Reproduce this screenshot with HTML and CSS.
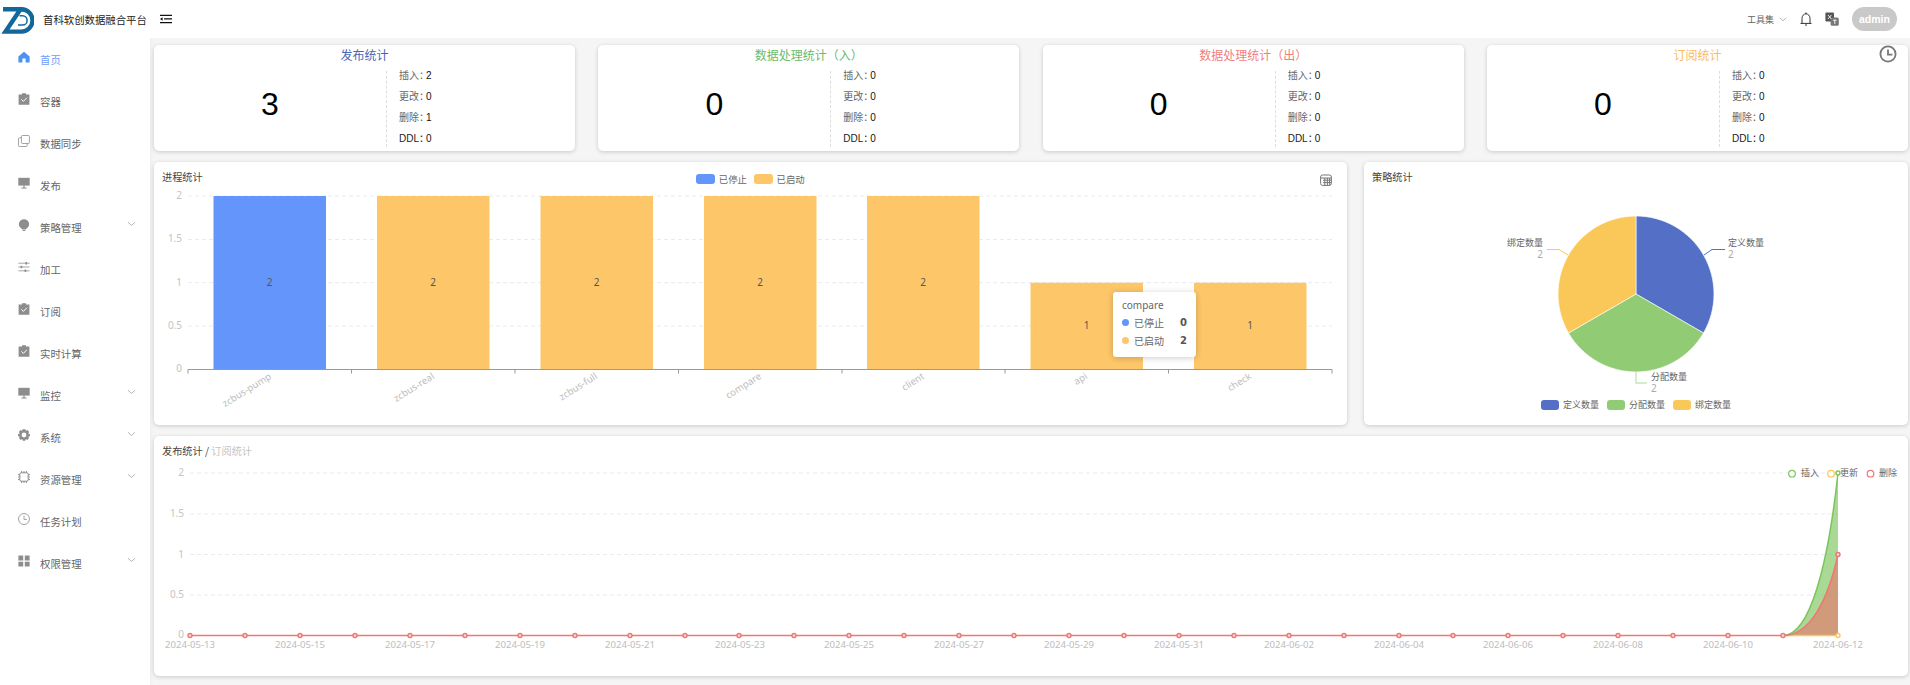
FILE: index.html
```html
<!DOCTYPE html>
<html>
<head>
    <title>首科软创数据融合平台</title>
    <link rel="stylesheet" href="styles.css">
</head>
<body>

<svg class="icon-defs" width="0" height="0">
    <symbol id="i-home" viewBox="0 0 12 12"><path d="M6 .8 11.6 5.6V11.4H7.6V7.6H4.4V11.4H.4V5.6Z"/></symbol>
    <symbol id="i-task" viewBox="0 0 12 12"><path d="M4 .2H8V1.4H11.4V11.8H.6V1.4H4Z"/><path d="M3.4 6.4 5.4 8.4 8.8 4.8" fill="none" stroke="#fff" stroke-width="1"/></symbol>
    <symbol id="i-copy" viewBox="0 0 12 12"><g fill="none" stroke="currentColor" stroke-width=".8"><rect x="3.4" y=".5" width="8" height="8" rx="1"/><path d="M3.4 2.8H1.4Q.5 2.8.5 3.7V10.5Q.5 11.5 1.5 11.5H8.2Q9.1 11.5 9.1 10.5V8.5"/></g></symbol>
    <symbol id="i-screen" viewBox="0 0 12 12"><path d="M.3 .8H11.7V8.6H.3Z"/><path d="M3.4 10.6H8.6V11.4H3.4ZM5.4 8.6H6.6V10.6H5.4Z"/></symbol>
    <symbol id="i-bulb" viewBox="0 0 12 12"><path d="M6 .2A5 5 0 0 1 8.6 9.5L7.8 10.4H4.2L3.4 9.5A5 5 0 0 1 6 .2Z"/><path d="M4.6 11H7.4V11.9H4.6Z"/></symbol>
    <symbol id="i-sliders" viewBox="0 0 12 12"><g fill="none" stroke="currentColor" stroke-width=".8"><path d="M.4 2.2H11.6M.4 6H11.6M.4 9.8H11.6"/></g><path d="M7.4 .9H9V3.5H7.4ZM2.6 4.7H4.2V7.3H2.6ZM6.6 8.5H8.2V11.1H6.6Z"/></symbol>
    <symbol id="i-gear" viewBox="0 0 12 12"><path fill-rule="evenodd" d="M4.6.2H7.4L7.9 1.8 9.5 1.1 11.1 3 10.1 4.4 11.9 5V7.2L10.2 7.7 11 9.3 9.2 11 7.8 10 7.2 11.8H4.8L4.2 10 2.8 11 1 9.3 1.8 7.7.1 7.2V5L1.9 4.4.9 3 2.5 1.1 4.1 1.8ZM6 3.6A2.4 2.4 0 1 0 6 8.4 2.4 2.4 0 0 0 6 3.6Z"/></symbol>
    <symbol id="i-chip" viewBox="0 0 12 12"><g fill="none" stroke="currentColor" stroke-width="1"><rect x="1.8" y="1.8" width="8.4" height="8.4" rx="1.4"/><path d="M3.6 0V1.8M6 0V1.8M8.4 0V1.8M3.6 10.2V12M6 10.2V12M8.4 10.2V12M0 3.6H1.8M0 6H1.8M0 8.4H1.8M10.2 3.6H12M10.2 6H12M10.2 8.4H12"/></g></symbol>
    <symbol id="i-clock" viewBox="0 0 12 12"><g fill="none" stroke="currentColor" stroke-width=".8"><circle cx="6" cy="6" r="5.5"/><path d="M6 2.6V6.4H9"/></g></symbol>
    <symbol id="i-grid" viewBox="0 0 12 12"><path d="M.4 .6H5.2V5.4H.4ZM6.8 .6H11.6V5.4H6.8ZM.4 6.8H5.2V11.6H.4ZM6.8 6.8H11.6V11.6H6.8Z"/></symbol>
    <symbol id="i-down" viewBox="0 0 10 6"><path d="M1 1 5 4.6 9 1" fill="none" stroke="currentColor" stroke-width=".8"/></symbol>
</svg>

<div class="app">
    <aside class="sidebar">
        <div class="brand">
            <svg class="logo" viewBox="0 0 34 34">
                <path d="M3 7.2H21.5A11 11.2 0 0 1 21.5 29.6H5.5L20 8" fill="none" stroke="#12689b" stroke-width="4.4"/>
                <path d="M19.5 13.8H22.5A4.6 4.6 0 0 1 22.5 23H18" fill="none" stroke="#12689b" stroke-width="1.5"/>
            </svg>
            <span class="brand-name">首科软创数据融合平台</span>
        </div>
        <nav class="menu">
            <a class="menu-item active"><svg class="menu-icon"><use href="#i-home"/></svg>首页</a>
            <a class="menu-item"><svg class="menu-icon"><use href="#i-task"/></svg>容器</a>
            <a class="menu-item"><svg class="menu-icon"><use href="#i-copy"/></svg>数据同步</a>
            <a class="menu-item"><svg class="menu-icon"><use href="#i-screen"/></svg>发布</a>
            <a class="menu-item"><svg class="menu-icon"><use href="#i-bulb"/></svg>策略管理<svg class="menu-arrow"><use href="#i-down"/></svg></a>
            <a class="menu-item"><svg class="menu-icon"><use href="#i-sliders"/></svg>加工</a>
            <a class="menu-item"><svg class="menu-icon"><use href="#i-task"/></svg>订阅</a>
            <a class="menu-item"><svg class="menu-icon"><use href="#i-task"/></svg>实时计算</a>
            <a class="menu-item"><svg class="menu-icon"><use href="#i-screen"/></svg>监控<svg class="menu-arrow"><use href="#i-down"/></svg></a>
            <a class="menu-item"><svg class="menu-icon"><use href="#i-gear"/></svg>系统<svg class="menu-arrow"><use href="#i-down"/></svg></a>
            <a class="menu-item"><svg class="menu-icon"><use href="#i-chip"/></svg>资源管理<svg class="menu-arrow"><use href="#i-down"/></svg></a>
            <a class="menu-item"><svg class="menu-icon"><use href="#i-clock"/></svg>任务计划</a>
            <a class="menu-item"><svg class="menu-icon"><use href="#i-grid"/></svg>权限管理<svg class="menu-arrow"><use href="#i-down"/></svg></a>
        </nav>
    </aside>

    <div class="main">
        <header class="topbar">
            <svg class="collapse-btn" viewBox="0 0 12 10"><path d="M0 .7H12V2H0ZM4 4.3H12V5.6H4ZM0 8H12V9.3H0ZM0 5 2.6 3.2V6.8Z"/></svg>
            <div class="topbar-right">
                <span class="tools">工具集<svg class="tools-arrow"><use href="#i-down"/></svg></span>
                <svg class="top-icon" viewBox="0 0 14 14"><path d="M1.5 11.4H12.5M3 11.4V6.4A4 4.6 0 0 1 11 6.4V11.4M6.2 1.2H7.8M6 13H8" fill="none" stroke="#333" stroke-width="1"/></svg>
                <svg class="top-icon" viewBox="0 0 14 14"><rect x=".4" y=".6" width="8.6" height="9" rx="1" fill="#555"/><rect x="5.6" y="5.6" width="8.2" height="8.2" rx="1.6" fill="#777"/><path d="M3 3 6.4 7M6.4 3 3 7M8 8.2H11.6M9.8 8V12" stroke="#fff" stroke-width=".9"/></svg>
                <span class="user-pill">admin</span>
            </div>
        </header>

        <div class="content">
            <section class="stat-row">
                <div class="stat-card">
                    <h3 class="stat-title title-blue">发布统计</h3>
                    <div class="stat-body">
                        <div class="stat-total">3</div>
                        <ul class="stat-list">
                            <li><span>插入：</span><b>2</b></li>
                            <li><span>更改：</span><b>0</b></li>
                            <li><span>删除：</span><b>1</b></li>
                            <li><span class="ddl">DDL：</span><b>0</b></li>
                        </ul>
                    </div>
                </div>
                <div class="stat-card">
                    <h3 class="stat-title title-green">数据处理统计（入）</h3>
                    <div class="stat-body">
                        <div class="stat-total">0</div>
                        <ul class="stat-list">
                            <li><span>插入：</span><b>0</b></li>
                            <li><span>更改：</span><b>0</b></li>
                            <li><span>删除：</span><b>0</b></li>
                            <li><span class="ddl">DDL：</span><b>0</b></li>
                        </ul>
                    </div>
                </div>
                <div class="stat-card">
                    <h3 class="stat-title title-red">数据处理统计（出）</h3>
                    <div class="stat-body">
                        <div class="stat-total">0</div>
                        <ul class="stat-list">
                            <li><span>插入：</span><b>0</b></li>
                            <li><span>更改：</span><b>0</b></li>
                            <li><span>删除：</span><b>0</b></li>
                            <li><span class="ddl">DDL：</span><b>0</b></li>
                        </ul>
                    </div>
                </div>
                <div class="stat-card">
                    <h3 class="stat-title title-orange">订阅统计</h3>
                    <svg class="stat-clock" viewBox="0 0 18 18"><circle cx="9" cy="9" r="7.6"/><path d="M9 4.4V9.6H13.4"/></svg>
                    <div class="stat-body">
                        <div class="stat-total">0</div>
                        <ul class="stat-list">
                            <li><span>插入：</span><b>0</b></li>
                            <li><span>更改：</span><b>0</b></li>
                            <li><span>删除：</span><b>0</b></li>
                            <li><span class="ddl">DDL：</span><b>0</b></li>
                        </ul>
                    </div>
                </div>
            </section>

            <section class="chart-row">
                <div class="panel">
                    <div class="panel-head">
                        <span class="panel-title">进程统计</span>
                        <div class="bar-legend">
                            <span class="legend-key key-blue"></span><span>已停止</span>
                            <span class="legend-key key-orange"></span><span>已启动</span>
                        </div>
                        <svg class="toolbox" viewBox="0 0 12 12"><rect x=".6" y="1" width="10.8" height="10.4" rx="2"/><path d="M.6 4H11.4M3 6.2H11.4M3 8.6H11.4M4.8 4V11.4M7.4 4V11.4M9.6 4V11.4"/></svg>
                    </div>
                    <svg class="chart" viewBox="154 188 1193 237" width="1193" height="237">
                        <g class="grid">
                            <path d="M188 196H1332M188 239.5H1332M188 282.7H1332M188 326H1332"/>
                        </g>
                        <g class="axis-y" text-anchor="end">
                            <text x="182" y="199">2</text>
                            <text x="182" y="242">1.5</text>
                            <text x="182" y="286">1</text>
                            <text x="182" y="329">0.5</text>
                            <text x="182" y="372">0</text>
                        </g>
                        <rect class="bar-blue" x="213.5" y="196" width="112.5" height="173.5"/>
                        <rect class="bar-orange" x="377" y="196" width="112.5" height="173.5"/>
                        <rect class="bar-orange" x="540.5" y="196" width="112.5" height="173.5"/>
                        <rect class="bar-orange" x="704" y="196" width="112.5" height="173.5"/>
                        <rect class="bar-orange" x="867" y="196" width="112.5" height="173.5"/>
                        <rect class="bar-orange" x="1030.5" y="282.7" width="112.5" height="86.8"/>
                        <rect class="bar-orange" x="1194" y="282.7" width="112.5" height="86.8"/>
                        <path class="axis-line" d="M188 373.5V369.5H1332V373.5M351.5 369.5V373.5M515 369.5V373.5M678.5 369.5V373.5M842 369.5V373.5M1005 369.5V373.5M1168.5 369.5V373.5"/>
                        <g class="bar-value" text-anchor="middle">
                            <text x="269.7" y="286">2</text>
                            <text x="433" y="286">2</text>
                            <text x="596.7" y="286">2</text>
                            <text x="760" y="286">2</text>
                            <text x="923" y="286">2</text>
                            <text x="1086.7" y="329">1</text>
                            <text x="1250" y="329">1</text>
                        </g>
                        <g class="axis-x" text-anchor="end">
                            <text transform="translate(272 378) rotate(-32)">zcbus-pump</text>
                            <text transform="translate(435 378) rotate(-32)">zcbus-real</text>
                            <text transform="translate(598 378) rotate(-32)">zcbus-full</text>
                            <text transform="translate(762 378) rotate(-32)">compare</text>
                            <text transform="translate(925 378) rotate(-32)">client</text>
                            <text transform="translate(1088 378) rotate(-32)">api</text>
                            <text transform="translate(1252 378) rotate(-32)">check</text>
                        </g>
                    </svg>
                    <div class="tooltip">
                        <div class="tooltip-name">compare</div>
                        <div class="tooltip-row"><i class="dot key-blue"></i><span>已停止</span><b>0</b></div>
                        <div class="tooltip-row"><i class="dot key-orange"></i><span>已启动</span><b>2</b></div>
                    </div>
                </div>

                <div class="panel">
                    <div class="panel-head">
                        <span class="panel-title">策略统计</span>
                    </div>
                    <svg class="chart" viewBox="1364 188 544 237" width="544" height="237">
                        <path class="slice" fill="#5470c6" d="M1636 294V216A78 78 0 0 1 1703.5 333Z"/>
                        <path class="slice" fill="#91cc75" d="M1636 294 1703.5 333A78 78 0 0 1 1568.5 333Z"/>
                        <path class="slice" fill="#fac858" d="M1636 294 1568.5 333A78 78 0 0 1 1636 216Z"/>
                        <path class="guide" stroke="#5470c6" d="M1704 255 1712 249.5H1725"/>
                        <path class="guide" stroke="#c8e6b8" stroke-width="1.4" d="M1636 372V383H1647"/>
                        <path class="guide" stroke="#fac858" d="M1568 255 1559 249.5H1547"/>
                        <g class="pie-label">
                            <text x="1728" y="246">定义数量</text>
                            <text class="pie-count" x="1728" y="258">2</text>
                            <text x="1651" y="380">分配数量</text>
                            <text class="pie-count" x="1651" y="392">2</text>
                            <g text-anchor="end">
                                <text x="1543" y="246">绑定数量</text>
                                <text class="pie-count" x="1543" y="258">2</text>
                            </g>
                        </g>
                        <rect x="1541" y="400" width="18" height="10" rx="3" fill="#5470c6"/>
                        <rect x="1607" y="400" width="18" height="10" rx="3" fill="#91cc75"/>
                        <rect x="1673" y="400" width="18" height="10" rx="3" fill="#fac858"/>
                        <g class="pie-label">
                            <text x="1563" y="408">定义数量</text>
                            <text x="1629" y="408">分配数量</text>
                            <text x="1695" y="408">绑定数量</text>
                        </g>
                    </svg>
                </div>
            </section>

            <section class="panel trend-panel">
                <div class="panel-head">
                    <span class="panel-title">发布统计 / <span class="title-off">订阅统计</span></span>
                </div>
                <svg class="chart" viewBox="154 462 1754 214" width="1754" height="214">
                    <g class="grid"><path d="M190 473H1838M190 514H1838M190 554.5H1838M190 595H1838"/></g>
                    <g class="axis-y" text-anchor="end">
                        <text x="184" y="476">2</text>
                        <text x="184" y="517">1.5</text>
                        <text x="184" y="557.5">1</text>
                        <text x="184" y="598">0.5</text>
                        <text x="184" y="638">0</text>
                    </g>
                    <g class="axis-x" text-anchor="middle">
                        <text x="190" y="648">2024-05-13</text>
                        <text x="300" y="648">2024-05-15</text>
                        <text x="410" y="648">2024-05-17</text>
                        <text x="520" y="648">2024-05-19</text>
                        <text x="630" y="648">2024-05-21</text>
                        <text x="740" y="648">2024-05-23</text>
                        <text x="849" y="648">2024-05-25</text>
                        <text x="959" y="648">2024-05-27</text>
                        <text x="1069" y="648">2024-05-29</text>
                        <text x="1179" y="648">2024-05-31</text>
                        <text x="1289" y="648">2024-06-02</text>
                        <text x="1399" y="648">2024-06-04</text>
                        <text x="1508" y="648">2024-06-06</text>
                        <text x="1618" y="648">2024-06-08</text>
                        <text x="1728" y="648">2024-06-10</text>
                        <text x="1838" y="648">2024-06-12</text>
                    </g>
                    <path class="area-green" d="M1783 635.5C1810 635.5 1828 565 1838 473V635.5Z"/>
                    <path class="area-red" d="M1783 635.5C1810 635.5 1828 600 1838 554.5V635.5Z"/>
                    <path class="line-yellow" d="M1783 635.5H1838"/>
                    <path class="line-green" d="M1783 635.5C1810 635.5 1828 565 1838 473"/>
                    <path class="line-red" d="M190 635.5H1783C1810 635.5 1828 600 1838 554.5"/>
                    <circle class="mark-green" cx="1838" cy="473" r="2"/>
                    <circle class="mark-yellow" cx="1838" cy="635.5" r="2"/>
                    <g class="mark-red">
                        <circle cx="190" cy="635.5" r="2"/><circle cx="245" cy="635.5" r="2"/><circle cx="300" cy="635.5" r="2"/>
                        <circle cx="355" cy="635.5" r="2"/><circle cx="410" cy="635.5" r="2"/><circle cx="465" cy="635.5" r="2"/>
                        <circle cx="520" cy="635.5" r="2"/><circle cx="575" cy="635.5" r="2"/><circle cx="630" cy="635.5" r="2"/>
                        <circle cx="685" cy="635.5" r="2"/><circle cx="739" cy="635.5" r="2"/><circle cx="794" cy="635.5" r="2"/>
                        <circle cx="849" cy="635.5" r="2"/><circle cx="904" cy="635.5" r="2"/><circle cx="959" cy="635.5" r="2"/>
                        <circle cx="1014" cy="635.5" r="2"/><circle cx="1069" cy="635.5" r="2"/><circle cx="1124" cy="635.5" r="2"/>
                        <circle cx="1179" cy="635.5" r="2"/><circle cx="1234" cy="635.5" r="2"/><circle cx="1289" cy="635.5" r="2"/>
                        <circle cx="1344" cy="635.5" r="2"/><circle cx="1399" cy="635.5" r="2"/><circle cx="1453" cy="635.5" r="2"/>
                        <circle cx="1508" cy="635.5" r="2"/><circle cx="1563" cy="635.5" r="2"/><circle cx="1618" cy="635.5" r="2"/>
                        <circle cx="1673" cy="635.5" r="2"/><circle cx="1728" cy="635.5" r="2"/><circle cx="1783" cy="635.5" r="2"/>
                        <circle cx="1838" cy="554.5" r="2"/>
                    </g>
                    <circle class="legend-ring" stroke="#7cc45c" cx="1792" cy="473.7" r="3.3"/>
                    <circle class="legend-ring" stroke="#fac858" cx="1831" cy="473.7" r="3.3"/>
                    <circle class="legend-ring" stroke="#ee7777" cx="1870.5" cy="473.7" r="3.3"/>
                    <g class="pie-label">
                        <text x="1801" y="476">插入</text>
                        <text x="1840" y="476">更新</text>
                        <text x="1879" y="476">删除</text>
                    </g>
                </svg>
            </section>
        </div>
    </div>
</div>

</body>
</html>
```

FILE: styles.css
```css
* {
    box-sizing: border-box;
}

body {
    margin: 0;
    width: 1910px;
    height: 685px;
    overflow: hidden;
    background-color: #f5f5f5;
    color: #333;
    font-family: "Liberation Sans", "Noto Sans CJK SC", sans-serif;
    font-size: 10px;
}

.icon-defs {
    position: absolute;
}

.app {
    display: flex;
    height: 100%;
}

/* sidebar */
.sidebar {
    width: 150px;
    flex-shrink: 0;
    background-color: #fff;
    box-shadow: 1px 0 4px rgba(0, 0, 0, 0.04);
}

.brand {
    display: flex;
    align-items: center;
    height: 38px;
}

.logo {
    width: 34px;
    height: 34px;
    flex-shrink: 0;
}

.brand-name {
    margin-left: 9px;
    font-size: 10.4px;
    color: #222;
    white-space: nowrap;
}

.menu-item {
    display: flex;
    align-items: center;
    height: 42px;
    padding: 0 14px 0 18px;
    color: #666;
    fill: #8d8d8d;
    font-size: 10.4px;
}

.menu-item.active {
    color: #6f9dff;
    fill: #4c93f5;
}

.menu-icon {
    width: 12px;
    height: 12px;
    margin-right: 10px;
    margin-top: -4px;
    color: #8d8d8d;
}

.menu-arrow {
    width: 9px;
    height: 6px;
    margin-left: auto;
    margin-top: -7px;
    color: #999;
}

/* top bar */
.main {
    flex: 1;
    min-width: 0;
}

.topbar {
    display: flex;
    align-items: center;
    justify-content: space-between;
    height: 38px;
    padding: 0 13px 0 10px;
    background-color: #fff;
}

.collapse-btn {
    width: 12px;
    height: 10px;
    fill: #111;
}

.topbar-right {
    display: flex;
    align-items: center;
}

.tools {
    display: flex;
    align-items: center;
    font-size: 9px;
    color: #666;
}

.tools-arrow {
    width: 8px;
    height: 5px;
    margin-left: 5px;
    color: #888;
}

.top-icon {
    width: 14px;
    height: 14px;
    margin-left: 12px;
}

.user-pill {
    width: 45px;
    height: 24px;
    margin-left: 13px;
    border-radius: 12px;
    background-color: #c9c9c9;
    color: #fff;
    font-size: 10.5px;
    font-weight: bold;
    line-height: 24px;
    text-align: center;
}

/* page content */
.content {
    display: flex;
    flex-direction: column;
    gap: 11px;
    padding: 7px 2px 0 4px;
}

.stat-row {
    display: grid;
    grid-template-columns: repeat(4, 421px);
    gap: 23.33px;
}

.stat-card {
    position: relative;
    height: 106px;
    padding-top: 4px;
    background-color: #fff;
    border-radius: 5px;
    box-shadow: 0 1px 4px rgba(0, 0, 0, 0.18);
}

.stat-title {
    margin: 0;
    height: 22px;
    font-size: 12px;
    font-weight: normal;
    line-height: 14px;
    text-align: center;
}

.title-blue {
    color: #4a66b8;
}

.title-green {
    color: #6cba6c;
}

.title-red {
    color: #ef7f7f;
}

.title-orange {
    color: #f7bd5f;
}

.stat-clock {
    position: absolute;
    top: 0;
    right: 11px;
    width: 18px;
    height: 18px;
    fill: none;
    stroke: #777;
    stroke-width: 1.8;
}

.stat-body {
    display: flex;
    height: 76px;
}

.stat-total {
    width: 233px;
    padding-bottom: 2px;
    border-right: 1px dashed #ddd;
    color: #000;
    font-size: 32px;
    line-height: 66px;
    text-align: center;
}

.stat-list {
    margin: 0;
    padding: 0 0 0 12px;
    list-style: none;
}

.stat-list li {
    display: flex;
    height: 10px;
    margin-bottom: 11px;
    line-height: 10px;
}

.stat-list span {
    width: 27px;
    color: #666;
    white-space: nowrap;
}

.stat-list .ddl {
    color: #222;
}

.stat-list b {
    color: #111;
    font-weight: normal;
}

.chart-row {
    display: grid;
    grid-template-columns: 1193px 544px;
    gap: 17px;
}

.panel {
    position: relative;
    height: 263px;
    background-color: #fff;
    border-radius: 5px;
    box-shadow: 0 1px 4px rgba(0, 0, 0, 0.18);
}

.trend-panel {
    height: 240px;
}

.panel-head {
    display: grid;
    grid-template-columns: 1fr auto 1fr;
    align-items: center;
    height: 26px;
    padding: 2px 15px 0 8px;
}

.panel-title {
    font-family: "Noto Sans CJK SC", sans-serif;
    font-size: 10.2px;
    color: #444;
    white-space: nowrap;
}

.title-off {
    color: #c4c4c4;
}

.bar-legend {
    display: flex;
    align-items: center;
    margin: 6px 0 0 7px;
    font-family: "Noto Sans CJK SC", sans-serif;
    font-size: 9.4px;
    color: #666;
}

.legend-key {
    width: 18.5px;
    height: 10px;
    margin-right: 4px;
    border-radius: 3px;
}

.legend-key + span + .legend-key {
    margin-left: 7px;
}

.key-blue {
    background-color: #6395fa;
}

.key-orange {
    background-color: #fcc669;
}

.toolbox {
    justify-self: end;
    width: 12px;
    height: 12px;
    margin-top: 8px;
    fill: none;
    stroke: #777;
    stroke-width: 1;
}

/* charts */
.chart {
    display: block;
    font-family: "Noto Sans", "Noto Sans CJK SC", sans-serif;
}

.grid path {
    fill: none;
    stroke: #e6ebf4;
    stroke-dasharray: 4 3;
}

.axis-y text {
    fill: #c4c4c4;
    font-size: 10px;
}

.axis-x text {
    fill: #bdbdbd;
    font-size: 9.6px;
}

.axis-line {
    fill: none;
    stroke: #999;
    stroke-width: 1;
}

.bar-blue {
    fill: #6395fa;
}

.bar-orange {
    fill: #fcc669;
}

.bar-value text {
    fill: #555;
    font-size: 10px;
}

.slice {
    stroke: #fff;
    stroke-width: 0.6;
}

.guide {
    fill: none;
}

.pie-label text {
    fill: #666;
    font-size: 9px;
}

.pie-label .pie-count {
    fill: #aaa;
    font-size: 10px;
}

.area-green {
    fill: rgba(124, 196, 92, 0.65);
}

.area-red {
    fill: rgba(238, 102, 102, 0.55);
}

.line-green,
.line-red,
.line-yellow {
    fill: none;
    stroke-width: 1.5;
}

.line-green {
    stroke: #7cc45c;
}

.line-red {
    stroke: #ee7777;
}

.line-yellow {
    stroke: #fac858;
}

.mark-red circle,
.mark-green,
.mark-yellow {
    fill: #fff;
    stroke-width: 1.4;
}

.mark-red circle {
    fill: #fcd9d9;
    stroke: #ee7777;
}

.mark-green {
    stroke: #7cc45c;
}

.mark-yellow {
    stroke: #fac858;
}

.legend-ring {
    fill: #fff;
    stroke-width: 1.2;
}

/* tooltip over the bars */
.tooltip {
    position: absolute;
    left: 959px;
    top: 130px;
    width: 83px;
    height: 65px;
    padding: 6px 9px;
    background-color: #fff;
    border-radius: 3px;
    box-shadow: 0 1px 6px rgba(0, 0, 0, 0.2);
    font-family: "Noto Sans", "Noto Sans CJK SC", sans-serif;
    color: #666;
    font-size: 10px;
}

.tooltip-name {
    line-height: 14px;
    margin-bottom: 1px;
}

.tooltip-row {
    display: flex;
    align-items: center;
    height: 18px;
}

.tooltip-row b {
    margin-left: auto;
    color: #555;
    font-family: "DejaVu Sans", sans-serif;
    font-size: 10px;
}

.dot {
    width: 7px;
    height: 7px;
    margin-right: 5px;
    border-radius: 50%;
}
```
